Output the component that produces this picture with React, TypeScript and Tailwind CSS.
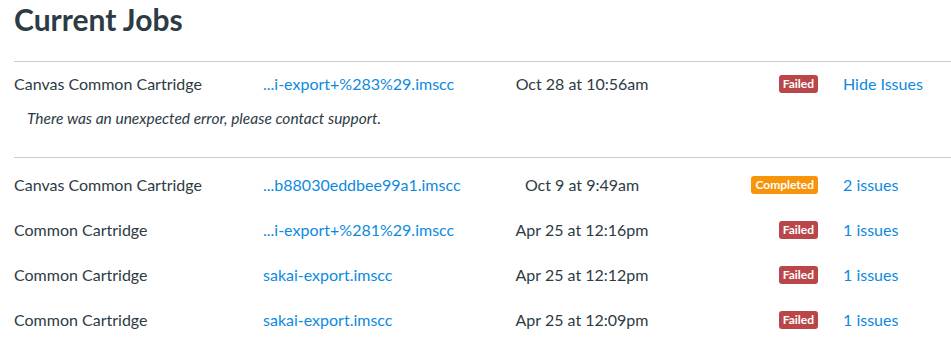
const JOBS = [
  {
    type: 'Canvas Common Cartridge',
    file: '...i-export+%283%29.imscc',
    date: 'Oct 28 at 10:56am',
    status: 'Failed',
    action: 'Hide Issues',
    error: 'There was an unexpected error, please contact support.',
  },
  {
    type: 'Canvas Common Cartridge',
    file: '...b88030eddbee99a1.imscc',
    date: 'Oct 9 at 9:49am',
    status: 'Completed',
    action: '2 issues',
  },
  {
    type: 'Common Cartridge',
    file: '...i-export+%281%29.imscc',
    date: 'Apr 25 at 12:16pm',
    status: 'Failed',
    action: '1 issues',
  },
  {
    type: 'Common Cartridge',
    file: 'sakai-export.imscc',
    date: 'Apr 25 at 12:12pm',
    status: 'Failed',
    action: '1 issues',
  },
  {
    type: 'Common Cartridge',
    file: 'sakai-export.imscc',
    date: 'Apr 25 at 12:09pm',
    status: 'Failed',
    action: '1 issues',
  },
]

function Badge({ status }: { status: string }) {
  const color = status === 'Completed' ? 'bg-[#f7940a]' : 'bg-[#b9474a]'
  return (
    <span className={`${color} text-white text-[12px] font-bold leading-[18px] h-[18px] px-[4px] rounded-[3px]`}>
      {status}
    </span>
  )
}

function JobRow({ job }: { job: (typeof JOBS)[number] }) {
  return (
    <div className="grid grid-cols-[249px_229px_180px_146px_1fr] h-[45px] pb-[2px] items-center text-[16px]">
      <div className="text-[#2d3b45]">{job.type}</div>
      <a className="text-[#0d8ae0]">{job.file}</a>
      <div className="text-center text-[#2d3b45]">{job.date}</div>
      <div className="flex justify-end">
        <Badge status={job.status} />
      </div>
      <a className="pl-[25px] text-[#0d8ae0]">{job.action}</a>
    </div>
  )
}

export default function App() {
  const [first, ...rest] = JOBS
  return (
    <div className="bg-white w-[951px] h-[361px] overflow-hidden pl-[14px] font-['Lato',sans-serif]">
      <h2 className="text-[30px] font-bold leading-[36px] text-[#2d3b45] pt-[1px] pb-[24px]">Current Jobs</h2>

      <div className="border-t border-[#c7cdd1]">
        <JobRow job={first} />
        <div className="pl-[13px] h-[24px] flex items-center text-[15.5px] italic text-[#2d3b45]">{first.error}</div>
        <div className="h-[26px]" />
      </div>

      <div className="border-t border-[#c7cdd1] pt-[5px]">
        {rest.map((job, i) => (
          <JobRow key={i} job={job} />
        ))}
      </div>
    </div>
  )
}
